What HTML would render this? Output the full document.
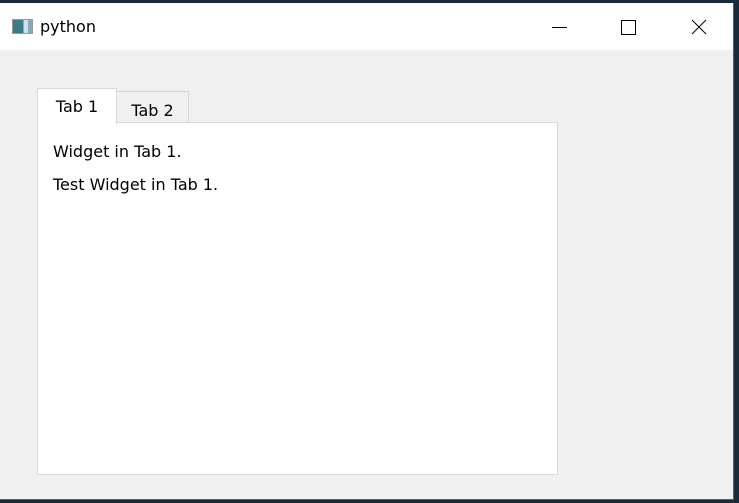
<!DOCTYPE html>
<html><head><meta charset="utf-8"><style>
*{margin:0;padding:0;box-sizing:border-box}
body{width:739px;height:503px;background:#1b2a3a;position:relative;overflow:hidden;font-family:"DejaVu Sans","Liberation Sans",sans-serif;}
#win{position:absolute;left:0;top:3px;width:734px;height:497px;background:#f0f0f0;border-right:1px solid #2a6ab0;border-bottom:1px solid #2a6ab0;}
#title{position:absolute;left:0;top:0;width:733px;height:47px;background:#fff;}
#title .t{position:absolute;left:40px;top:14px;font-size:16px;color:#000;}
#icon{position:absolute;left:12px;top:16px;width:21px;height:15px;border:1px solid #999;background:linear-gradient(90deg,#3a7a8a 0 55%,#cfe0e8 55% 80%,#8ab 80%);}
.pane{position:absolute;left:37px;top:119px;width:521px;height:353px;background:#fff;border:1px solid #d9d9d9;}
.tab{position:absolute;font-size:16px;color:#000;text-align:center;}
#t1{left:37px;top:85px;width:80px;height:36px;background:#fff;border:1px solid #d9d9d9;border-bottom:none;padding-top:8px;z-index:2}
#t2{left:116px;top:88px;width:73px;height:32px;background:#f0f0f0;border:1px solid #d9d9d9;border-bottom:none;padding-top:9px;}
.l{position:absolute;left:53px;font-size:16px;color:#000;}
</style></head><body>
<div id="win">
<div id="title"><div id="icon"></div><div class="t">python</div>
<svg style="position:absolute;left:540px;top:0" width="193" height="47">
<line x1="12" y1="24.5" x2="27" y2="24.5" stroke="#000" stroke-width="1"/>
<rect x="81.5" y="17.5" width="14" height="14" fill="none" stroke="#000"/>
<line x1="152" y1="17" x2="166" y2="31" stroke="#000"/>
<line x1="166" y1="17" x2="152" y2="31" stroke="#000"/>
</svg></div>
<div id="t2" class="tab">Tab 2</div>
<div class="pane"></div>
<div id="t1" class="tab">Tab 1</div>
<div class="l" style="top:139px">Widget in Tab 1.</div>
<div class="l" style="top:172px">Test Widget in Tab 1.</div>
</div>
</body></html>
